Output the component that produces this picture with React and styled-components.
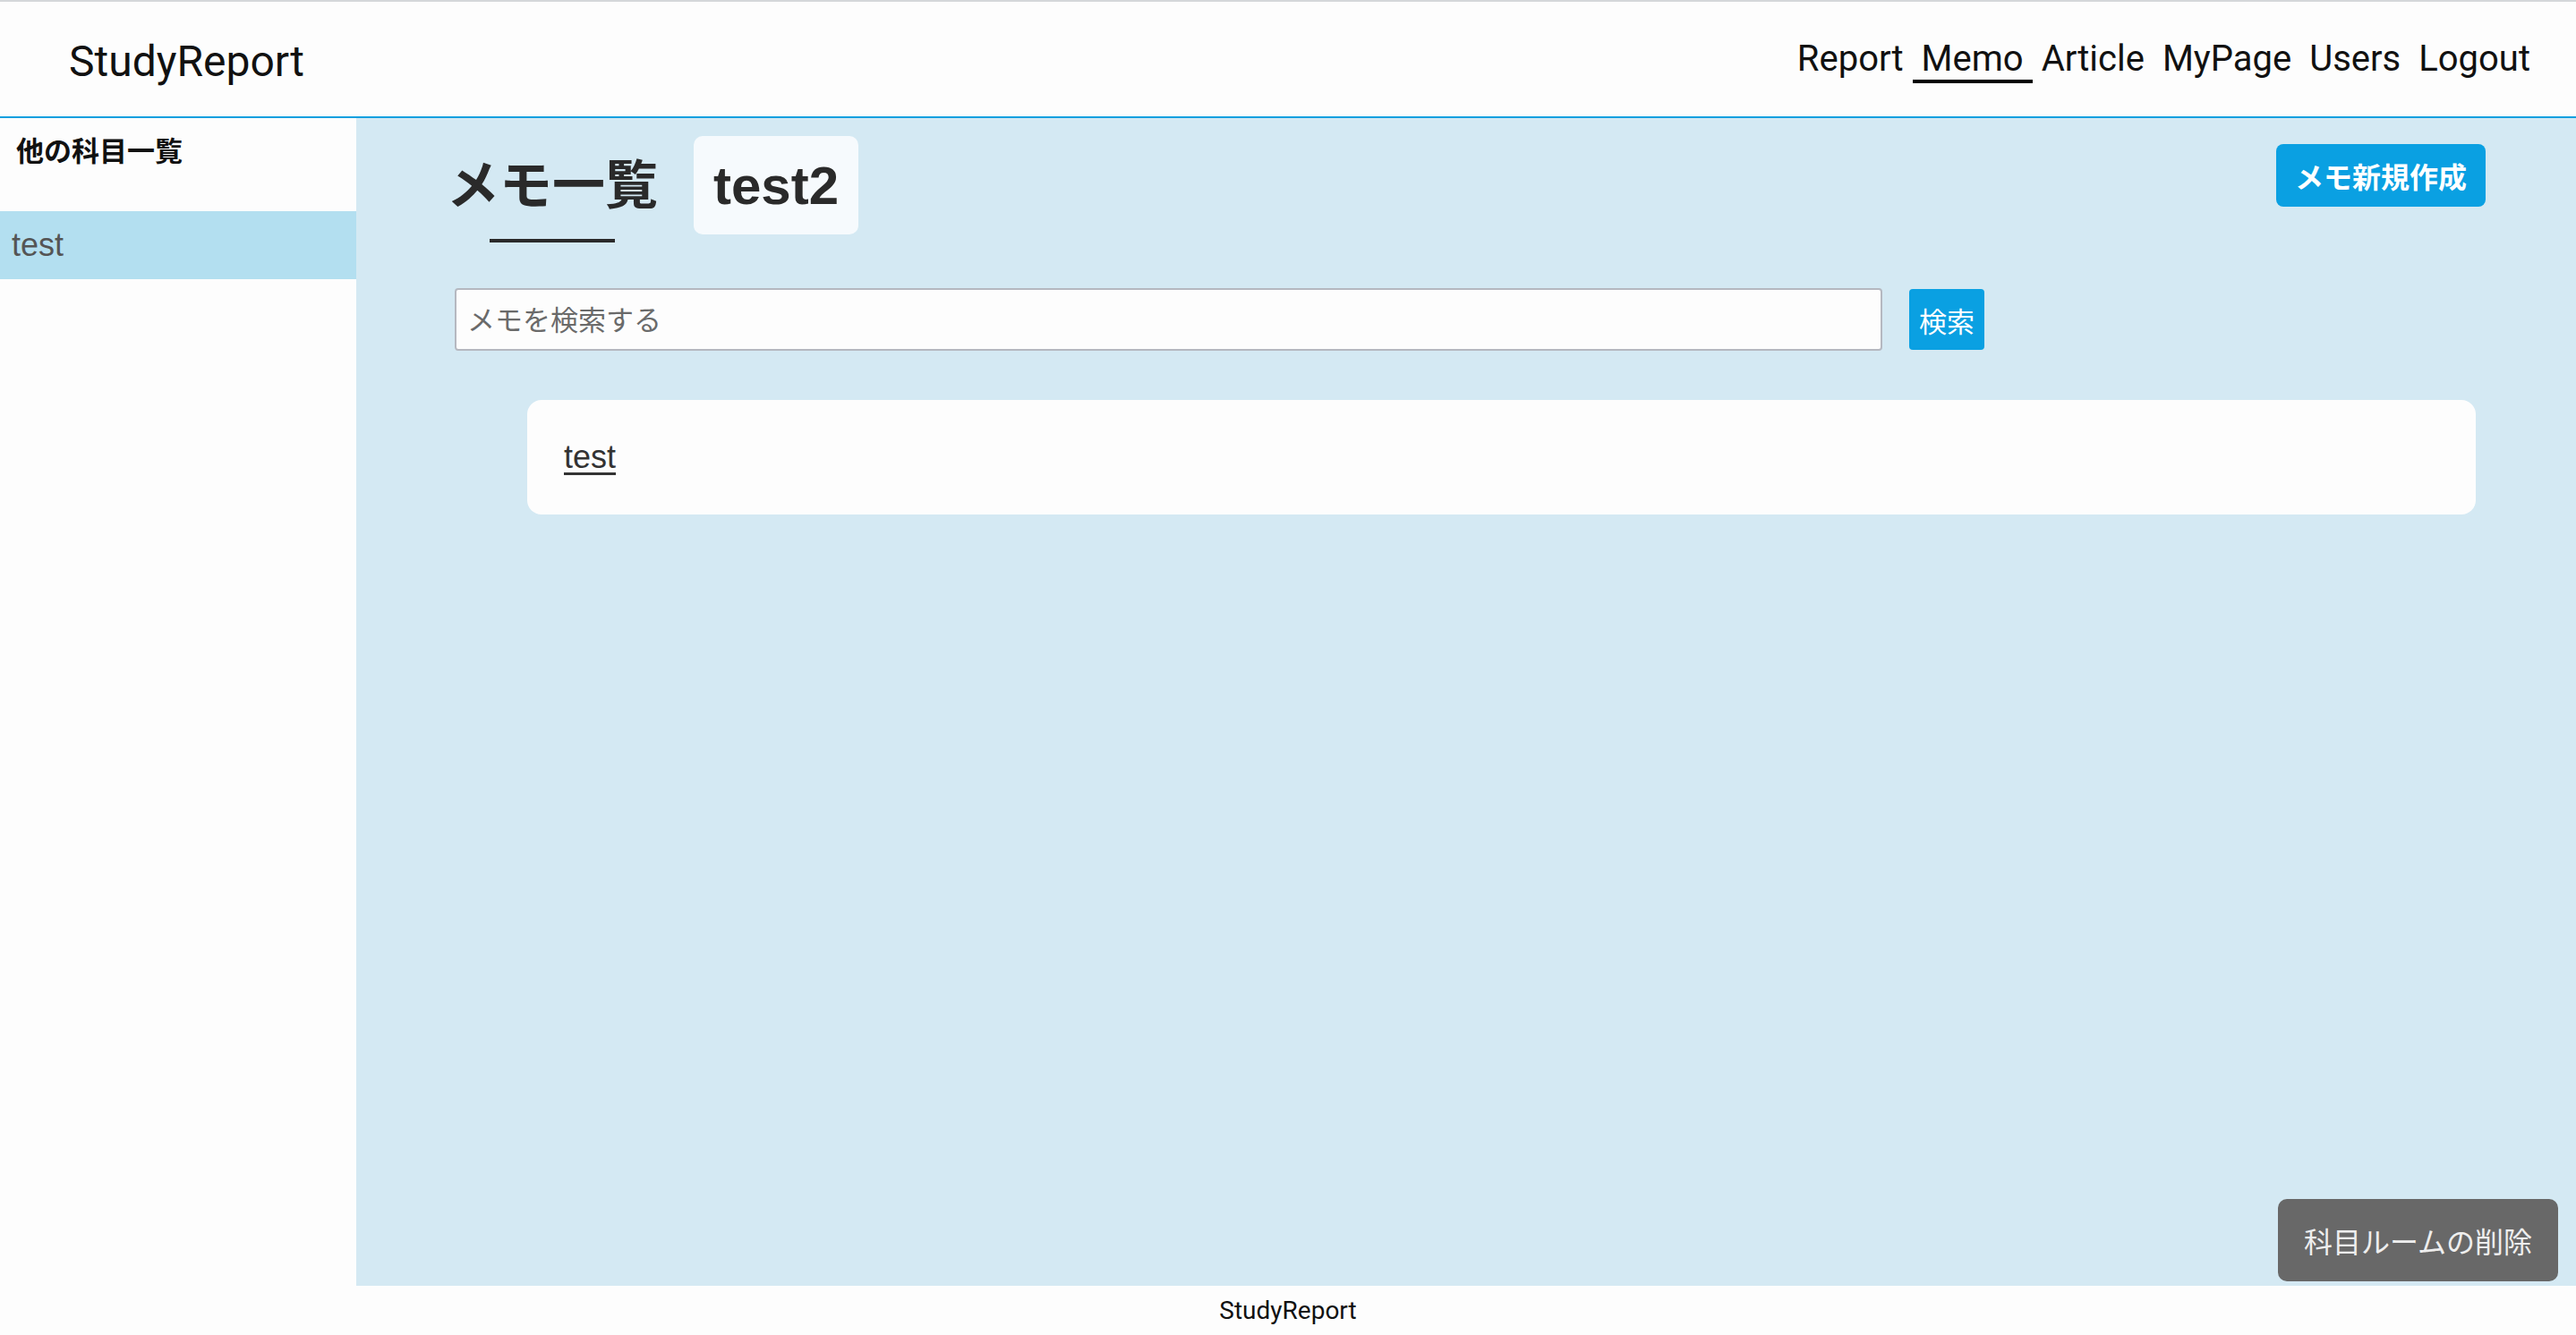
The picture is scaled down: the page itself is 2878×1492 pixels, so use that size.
import React from 'react';
import styled, { createGlobalStyle } from 'styled-components';

const GlobalStyle = createGlobalStyle`
  * {
    box-sizing: border-box;
  }
  body {
    margin: 0;
    font-family: "Liberation Sans", "Noto Sans CJK JP", sans-serif;
    color: #222;
  }
`;

const Page = styled.div`
  display: flex;
  flex-direction: column;
  min-height: 100vh;
`;

const Header = styled.header`
  height: 132px;
  padding: 4px 41px 0 77px;
  display: flex;
  align-items: center;
  justify-content: space-between;
  background: #fdfdfd;
  border-top: 2px solid #d4d7da;
  border-bottom: 2px solid #0b9fdf;
`;

const Logo = styled.div`
  font-family: Roboto, sans-serif;
  font-size: 48px;
  color: #111;
`;

const Nav = styled.nav`
  display: flex;
`;

const NavLink = styled.a`
  font-family: Roboto, sans-serif;
  font-size: 40px;
  line-height: 46px;
  padding: 0 10px;
  color: #111;
  text-decoration: none;
  border-bottom: 4px solid ${(p) => (p.$active ? '#000' : 'transparent')};
`;

const Body = styled.div`
  flex: 1;
  display: flex;
`;

const Sidebar = styled.aside`
  width: 398px;
  flex-shrink: 0;
  background: #fdfdfd;
`;

const SideTitle = styled.h3`
  margin: 0;
  padding: 11px 18px 45px;
  font-family: "Noto Sans CJK JP", sans-serif;
  font-size: 31px;
  line-height: 48px;
  font-weight: 700;
  color: #111;
`;

const SideItem = styled.div`
  height: 76px;
  line-height: 76px;
  padding-left: 13px;
  font-size: 36px;
  color: #555;
  background: ${(p) => (p.$active ? '#b3dff0' : 'transparent')};
`;

const Main = styled.main`
  flex: 1;
  padding: 20px 101px 40px 101px;
  background: #d4e9f3;
`;

const TitleRow = styled.div`
  display: flex;
  justify-content: space-between;
  align-items: flex-start;
`;

const TitleGroup = styled.div`
  display: flex;
  align-items: flex-start;
  gap: 40px;
`;

const TitleWrap = styled.div`
  display: flex;
  flex-direction: column;
  align-items: center;
  margin-top: 11px;
`;

const Title = styled.h2`
  margin: 0;
  font-family: "Noto Sans CJK JP", sans-serif;
  font-size: 59px;
  line-height: 80px;
  font-weight: 700;
  color: #2a2a2a;
`;

const TitleLine = styled.div`
  width: 140px;
  height: 4px;
  margin-top: 24px;
  background: #2a2a2a;
`;

const SubjectBadge = styled.div`
  height: 110px;
  padding: 0 22px;
  display: flex;
  align-items: center;
  border-radius: 10px;
  background: rgba(255, 255, 255, 0.78);
  font-size: 60px;
  font-weight: 700;
  color: #2a2a2a;
`;

const BlueButton = styled.button`
  height: ${(p) => p.$h}px;
  padding: 0 ${(p) => p.$px}px;
  border: none;
  border-radius: ${(p) => p.$r}px;
  background: #0aa0e2;
  color: #fff;
  font-family: "Noto Sans CJK JP", sans-serif;
  font-size: ${(p) => p.$fs}px;
  font-weight: ${(p) => (p.$bold ? 700 : 400)};
  margin-top: ${(p) => p.$mt || 0}px;
  cursor: pointer;
`;

const SearchRow = styled.form`
  display: flex;
  align-items: center;
  gap: 30px;
  margin: 51px 0 0 9px;
`;

const SearchInput = styled.input`
  width: 1595px;
  height: 70px;
  padding: 0 12px 4px;
  border: 2px solid #b5b8c0;
  border-radius: 4px;
  background: #fdfdfd;
  font-family: "Noto Sans CJK JP", sans-serif;
  font-size: 31px;
  color: #333;

  &::placeholder {
    color: #6a6a6a;
  }
`;

const MemoCard = styled.div`
  height: 128px;
  margin: 55px 11px 0 90px;
  padding-left: 41px;
  display: flex;
  align-items: center;
  border-radius: 16px;
  background: #fdfdfd;
`;

const MemoLink = styled.a`
  font-size: 36px;
  color: #333;
  text-decoration: underline;
  text-underline-offset: 5px;
`;

const DeleteButton = styled.button`
  position: fixed;
  right: 20px;
  bottom: 60px;
  height: 92px;
  padding: 0 29px;
  border: none;
  border-radius: 10px;
  background: #686868;
  color: #eeeeee;
  font-family: "Noto Sans CJK JP", sans-serif;
  font-size: 32px;
  cursor: pointer;
`;

const Footer = styled.footer`
  height: 55px;
  line-height: 55px;
  text-align: center;
  background: #fdfdfd;
  font-family: Roboto, sans-serif;
  font-size: 28px;
  color: #111;
`;

const navItems = ['Report', 'Memo', 'Article', 'MyPage', 'Users', 'Logout'];

const App = () => {
  return (
    <Page>
      <GlobalStyle />
      <Header>
        <Logo>StudyReport</Logo>
        <Nav>
          {navItems.map((item) => (
            <NavLink key={item} href="#" $active={item === 'Memo'}>
              {item}
            </NavLink>
          ))}
        </Nav>
      </Header>
      <Body>
        <Sidebar>
          <SideTitle>他の科目一覧</SideTitle>
          <SideItem $active>test</SideItem>
        </Sidebar>
        <Main>
          <TitleRow>
            <TitleGroup>
              <TitleWrap>
                <Title>メモ一覧</Title>
                <TitleLine />
              </TitleWrap>
              <SubjectBadge>test2</SubjectBadge>
            </TitleGroup>
            <BlueButton $h={70} $px={21} $r={8} $fs={32} $bold $mt={9}>
              メモ新規作成
            </BlueButton>
          </TitleRow>
          <SearchRow onSubmit={(e) => e.preventDefault()}>
            <SearchInput placeholder="メモを検索する" />
            <BlueButton $h={68} $px={11} $r={4} $fs={31}>
              検索
            </BlueButton>
          </SearchRow>
          <MemoCard>
            <MemoLink href="#">test</MemoLink>
          </MemoCard>
        </Main>
      </Body>
      <Footer>StudyReport</Footer>
      <DeleteButton>科目ルームの削除</DeleteButton>
    </Page>
  );
};

export default App;
